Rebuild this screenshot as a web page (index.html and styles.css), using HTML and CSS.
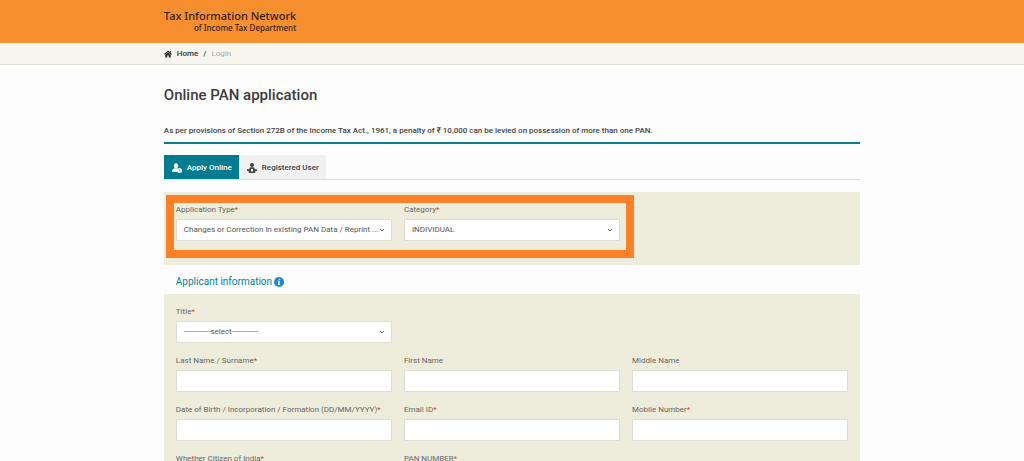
FILE: index.html
```html
<!DOCTYPE html>
<html lang="en">
<head>
<meta charset="utf-8">
<meta name="viewport" content="width=device-width, initial-scale=1">
<title>Online PAN application</title>
<link rel="stylesheet" href="styles.css">
</head>
<body>
<header class="banner">
  <div class="container">
    <div class="brand">
      <span class="brand-name">Tax Information Network</span>
      <span class="brand-sub">of Income Tax Department</span>
    </div>
  </div>
</header>
<nav class="crumbs" aria-label="Breadcrumb">
  <div class="container crumb-list">
    <svg class="home-icon" viewBox="0 0 16 16" aria-hidden="true"><path d="M8 1 0 8l1.200 1.300L8 3.800l6.800 5.500L16 8l-2.500-2.300V2h-2v1.800z"/><path d="M8 4.500 2.500 9v6h4v-4h3v4h4V9z"/></svg>
    <a class="crumb-link" href="#">Home</a>
    <span class="crumb-sep">/</span>
    <span class="crumb-here">Login</span>
  </div>
</nav>
<main class="container">
  <h1 class="page-title">Online PAN application</h1>
  <p class="notice">As per provisions of Section 272B of the Income Tax Act., 1961, a penalty of ₹ 10,000 can be levied on possession of more than one PAN.</p>
  <div class="tabs">
    <button class="tab tab-active" type="button">
      <svg class="tab-icon" viewBox="0 0 20 20" aria-hidden="true"><ellipse cx="8" cy="5.500" rx="4.500" ry="5"/><path d="M0 18c0-4.500 2-6.500 5.500-7.500h5l1.500 .8a5.300 5.300 0 0 0-1.500 6.700H0z"/><path fill-rule="evenodd" d="M15 10a5 5 0 1 0 0 10 5 5 0 0 0 0-10zm-.5 2.800h1V15l1.800 1-.5 .8-2.300-1.300z"/></svg>
      Apply Online
    </button>
    <button class="tab" type="button">
      <svg class="tab-icon" viewBox="0 0 20 20" aria-hidden="true"><circle cx="10" cy="4" r="4"/><path fill-rule="evenodd" d="M6.500 8.500h7l2.500 4h4v3.500h-3.500V20h-13v-4H0v-3.500h4zM8 12v5h4v-5z"/></svg>
      Registered User
    </button>
  </div>
  <form class="pan-form">
    <div class="panel fields type-panel">
      <div class="field">
        <label class="label" for="type">Application Type<span class="req">*</span></label>
        <select class="control select" id="type"><option>Changes or Correction in existing PAN Data / Reprint ...</option></select>
      </div>
      <div class="field">
        <label class="label" for="category">Category<span class="req">*</span></label>
        <select class="control select" id="category"><option>INDIVIDUAL</option></select>
      </div>
      <div class="highlight" aria-hidden="true"></div>
    </div>
    <h2 class="section-title">Applicant information
      <svg class="info-icon" viewBox="0 0 20 20" aria-hidden="true"><circle cx="10" cy="10" r="10" fill="#1c84d8"/><path fill="#fff" d="M9.600 3.500h2.800v2.600H9.600zM7.500 7.600h4.400l-1.200 6.800h1.600V16H7.600l1.200-6.800H7.500z"/></svg>
    </h2>
    <div class="panel fields">
      <div class="field first-column">
        <label class="label" for="title">Title<span class="req">*</span></label>
        <select class="control select" id="title"><option>------------select------------</option></select>
      </div>
      <div class="field first-column">
        <label class="label" for="last">Last Name / Surname<span class="req">*</span></label>
        <input class="control" id="last" type="text">
      </div>
      <div class="field">
        <label class="label" for="first">First Name</label>
        <input class="control" id="first" type="text">
      </div>
      <div class="field">
        <label class="label" for="middle">Middle Name</label>
        <input class="control" id="middle" type="text">
      </div>
      <div class="field">
        <label class="label" for="dob">Date of Birth / Incorporation / Formation (DD/MM/YYYY)<span class="req">*</span></label>
        <input class="control" id="dob" type="text">
      </div>
      <div class="field">
        <label class="label" for="email">Email ID<span class="req">*</span></label>
        <input class="control" id="email" type="email">
      </div>
      <div class="field">
        <label class="label" for="mobile">Mobile Number<span class="req">*</span></label>
        <input class="control" id="mobile" type="tel">
      </div>
      <div class="field">
        <label class="label" for="citizen">Whether Citizen of India<span class="req">*</span></label>
        <input class="control" id="citizen" type="text">
      </div>
      <div class="field">
        <label class="label" for="pan">PAN NUMBER<span class="req">*</span></label>
        <input class="control" id="pan" type="text">
      </div>
    </div>
  </form>
</main>
</body>
</html>
```
FILE: styles.css
```css
* { box-sizing: border-box; }
body {
  margin: 0;
  height: 100vh;
  overflow: hidden;
  background: #fdfdfd;
  color: #444;
  font-family: Roboto, "Liberation Sans", sans-serif;
  font-size: 8px;
  line-height: 10px;
}
.container { width: 68%; margin: 0 auto; }
.banner { background: #f78f2e; padding: 9px 0 10px; }
.brand {
  display: inline-flex;
  flex-direction: column;
  align-items: flex-end;
  vertical-align: top;
  color: #35200f;
  font-family: "Noto Sans", "Open Sans", sans-serif;
}
.brand-name { font-size: 11px; line-height: 14px; font-weight: 500; }
.brand-sub { font-size: 8px; line-height: 10px; font-weight: 500; }
.crumbs { background: #f6f6ee; border-bottom: 1px solid #e4e4dc; padding: 6px 0 5px; }
.crumb-list { display: flex; align-items: center; gap: 5px; }
.home-icon { width: 8px; height: 8px; fill: #333; }
.crumb-link { color: #333; font-weight: 500; text-decoration: none; }
.crumb-sep { color: #444; font-weight: 500; }
.crumb-here { color: #aaa; }
.page-title { margin: 20px 0 0; font-size: 15px; line-height: 20px; font-weight: 500; color: #3c3c3c; }
.notice { margin: 21px 0 11px; padding-bottom: 6px; border-bottom: 2px solid #0b7f93; font-weight: 500; }
.tabs { display: flex; border-bottom: 1px solid #ddd; }
.tab {
  display: flex;
  align-items: center;
  gap: 5px;
  height: 24px;
  padding: 1px 7px 0 8px;
  border: 0;
  background: #f1f1f1;
  color: #444;
  font: inherit;
  font-weight: 500;
}
.tab-active { background: #007c92; color: #fff; }
.tab-icon { width: 10px; height: 10px; fill: currentColor; }
.panel { background: #eeeddc; padding: 13px 12px; }
.fields { display: grid; grid-template-columns: repeat(3, 1fr); gap: 13px 12px; }
.type-panel { position: relative; margin-top: 12px; padding-bottom: 24px; }
.highlight {
  position: absolute;
  inset: 3px 226px 7px 2px;
  border: 8px solid #ff8127;
  pointer-events: none;
}
.first-column { grid-column: 1; }
.field { display: flex; flex-direction: column; gap: 4px; min-width: 0; }
.label { color: #666; }
.req { color: #e0401c; }
.control {
  width: 100%;
  height: 22px;
  padding: 0 7px;
  border: 1px solid #dedfd4;
  border-radius: 0;
  background: #fff;
  color: #555;
  font: inherit;
}
.select {
  appearance: none;
  background: #fff url("data:image/svg+xml,%3Csvg xmlns='http://www.w3.org/2000/svg' viewBox='0 0 8 6'%3E%3Cpath d='M2 2 4 4l2-2' fill='none' stroke='%23666'/%3E%3C/svg%3E") no-repeat right 5px center / 8px 6px;
}
.section-title {
  display: flex;
  align-items: center;
  gap: 2px;
  margin: 10px 12px 5px;
  color: #087f94;
  font-size: 10px;
  line-height: 14px;
  font-weight: 400;
}
.info-icon { width: 10px; height: 10px; }
```
